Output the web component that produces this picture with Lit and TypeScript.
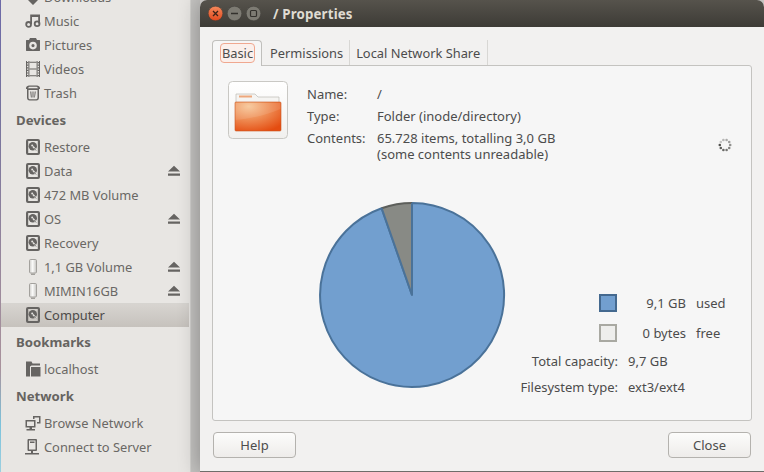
import { LitElement, html, css, svg } from "lit";
import { customElement } from "lit/decorators.js";

const icons: Record<string, unknown> = {
  drive: svg`<path fill-rule="evenodd" d="M3 0h10a2 2 0 0 1 2 2v12a2 2 0 0 1-2 2H3a2 2 0 0 1-2-2V2a2 2 0 0 1 2-2zM3.200 2v12h9.600V2z"/>
    <circle cx="7.800" cy="7.300" r="4.200"/><circle cx="7.200" cy="6.600" r="1" fill="#e8e6e3"/>
    <path d="M8 7.500l3.500 4.200" stroke="#e8e6e3" stroke-width="1.400"/><path d="M9 9l2.200 2.600" stroke="#666462" stroke-width=".8"/>`,
  usb: svg`<defs><linearGradient id="stick" x1="0" x2="1" y1="0" y2="0"><stop offset="0" stop-color="#cfcecb"/><stop offset=".45" stop-color="#fbfbfa"/><stop offset="1" stop-color="#c4c3c0"/></linearGradient></defs>
    <path fill="url(#stick)" stroke="#a3a19d" d="M4.500 1.500c0-.6.500-1 1-1h5c.5 0 1 .4 1 1v11.500c0 .6-.5 1-1 1h-5c-.5 0-1-.4-1-1z"/>
    <path fill="#a3a19d" d="M6 14.500h4V16H6z"/>`,
  download: svg`<path d="M5.500 0h5v9H15l-7 7-7-7h4.500z"/>`,
  music: svg`<path d="M5.200 1.500h9.800V4H7v7H5.200zM13.200 4H15v6.500h-1.800z"/>
    <circle cx="3.600" cy="11.400" r="2.400" fill="none" stroke="#666462" stroke-width="1.800"/>
    <circle cx="12.100" cy="10.700" r="2.400" fill="none" stroke="#666462" stroke-width="1.800"/>`,
  camera: svg`<path fill-rule="evenodd" d="M1.500 3H4l1-2h6l1 2h2.500c.3 0 .5.2.5.5v10c0 .3-.2.500-.5.500h-13c-.3 0-.5-.2-.5-.500v-10c0-.3.200-.500.500-.500zM8 4.800a3.800 3.800 0 1 0 0 7.600 3.800 3.800 0 0 0 0-7.600zM8 7a1.600 1.600 0 1 1 0 3.200A1.600 1.600 0 0 1 8 7z"/>`,
  film: svg`<path d="M1 0h1v16H1zM3.400 0h1v16h-1zM11.600 0h1v16h-1zM14 0h1v16h-1z"/>
    <path d="M2 1h1.400v1.200H2zM2 3.600h1.400v1.200H2zM2 6.200h1.400v1.200H2zM2 8.800h1.400V10H2zM2 11.400h1.400v1.200H2zM2 14h1.400v1.200H2zM12.600 1H14v1.200h-1.400zM12.600 3.600H14v1.200h-1.400zM12.600 6.200H14v1.200h-1.400zM12.600 8.800H14V10h-1.400zM12.600 11.400H14v1.200h-1.400zM12.600 14H14v1.200h-1.400z"/>
    <path d="M4.400 .8h7.200v1H4.400zM4.400 7.500h7.200v1H4.400zM4.400 14.200h7.200v1H4.400z"/>`,
  trash: svg`<path fill-rule="evenodd" d="M4 .5h8c1.200 0 3 1 3 2.500v1h-1v8.500c0 1.800-1 3-2.500 3h-7C3 15.500 2 14.300 2 12.500V4H1V3C1 1.500 2.800 .5 4 .5zM3 3.200h10c0-.9-1.300-1.500-2-1.500H5c-.7 0-2 .6-2 1.500zM3.500 5v7.500c0 1 .500 1.700 1.200 1.700h6.600c.7 0 1.200-.7 1.200-1.700V5z"/>
    <path d="M5.200 6.500h1.100l.5 6H5.900zM9.700 6.500h1.100l-.9 6H9.200zM7.500 6.500h1v6h-1z"/>`,
  folder: svg`<path d="M1 .5h5.500l1 2H15v2H6.500L5 5.500V15.500H1z"/><path d="M6 6h9.500v9.500H6z"/>`,
  network: svg`<path fill-rule="evenodd" d="M8 1h7.500v7.500H12V7h2V2.500H9.500V4H8zM.5 5h10v7.500H7v1.500h3v1.500H1.500V14h3v-1.500H.5zM2 6.500v4.500h7V6.500z"/>`,
  server: svg`<path fill-rule="evenodd" d="M3.500 0h7.500c.5 0 1 .5 1 1v10c0 .5-.5 1-1 1H8v2h6v1.500H0V14h6v-2H3.500c-.5 0-1-.5-1-1V1c0-.5.500-1 1-1zM4 1.500v9h6.500v-9zM5 2.500h4.500V4H5z"/>`,
};

type Row = { label: string; icon: string; eject?: boolean; selected?: boolean };
type Section = { title?: string; rows: Row[] };

const sections: Section[] = [
  {
    rows: [
      { label: "Downloads", icon: "download" },
      { label: "Music", icon: "music" },
      { label: "Pictures", icon: "camera" },
      { label: "Videos", icon: "film" },
      { label: "Trash", icon: "trash" },
    ],
  },
  {
    title: "Devices",
    rows: [
      { label: "Restore", icon: "drive" },
      { label: "Data", icon: "drive", eject: true },
      { label: "472 MB Volume", icon: "drive" },
      { label: "OS", icon: "drive", eject: true },
      { label: "Recovery", icon: "drive" },
      { label: "1,1 GB Volume", icon: "usb", eject: true },
      { label: "MIMIN16GB", icon: "usb", eject: true },
      { label: "Computer", icon: "drive", selected: true },
    ],
  },
  { title: "Bookmarks", rows: [{ label: "localhost", icon: "folder" }] },
  {
    title: "Network",
    rows: [
      { label: "Browse Network", icon: "network" },
      { label: "Connect to Server", icon: "server" },
    ],
  },
];

@customElement("app-sidebar")
export class AppSidebar extends LitElement {
  static styles = css`
    :host {
      display: block;
      width: 190px;
      flex: none;
      box-sizing: border-box;
      background: #e8e6e3;
      padding-left: 1px;
      color: #6a6865;
      font-size: 12.85px;
      overflow: hidden;
      position: relative;
    }
    .list {
      margin-top: -15px;
    }
    h3 {
      margin: 0;
      height: 30px;
      line-height: 30px;
      padding-left: 15px;
      font-size: 13.2px;
      font-weight: 700;
      color: #666461;
    }
    .row {
      display: flex;
      align-items: center;
      height: 24px;
      padding: 0 10px 0 24px;
    }
    .row.selected {
      margin-right: 1px;
      box-shadow: inset 0 1px 0 #d6d4d0;
      background: linear-gradient(#d8d5d1, #c6c2bd);
      color: #4c4a48;
    }
    .row svg {
      width: 16px;
      height: 16px;
      fill: #666462;
      flex: none;
    }
    .row span {
      margin-left: 3px;
      flex: 1;
    }
    .row .eject {
      width: 12px;
      height: 12px;
      margin-left: 0;
      flex: none;
    }
    .edge {
      position: absolute;
      left: 0;
      top: 0;
      bottom: 0;
      width: 1px;
      background: linear-gradient(#6d6aa8 0, #77749e 25%, #9c8a9c 60%, #a9929c 78%, #7cc3dc 90%, #9ccfe0 100%);
    }
  `;

  render() {
    return html`
      <div class="edge"></div>
      <div class="list">
        ${sections.map(
          (s) => html`
            ${s.title ? html`<h3>${s.title}</h3>` : ""}
            ${s.rows.map(
              (r) => html`
                <div class="row ${r.selected ? "selected" : ""}">
                  <svg viewBox="0 0 16 16">${icons[r.icon]}</svg>
                  <span>${r.label}</span>
                  ${r.eject
                    ? html`<svg class="eject" viewBox="0 0 12 12"><path d="M6 .7l6 5.800H0zM0 8.400h12v2.300H0z" /></svg>`
                    : ""}
                </div>
              `
            )}
          `
        )}
      </div>
    `;
  }
}

@customElement("app-root")
export class AppRoot extends LitElement {
  static styles = css`
    :host {
      display: flex;
      width: 764px;
      height: 472px;
      overflow: hidden;
      background: #d9d7d4;
      font-family: "Noto Sans", sans-serif;
      font-size: 13px;
      color: #4c4c4c;
    }
    .gap {
      width: 10px;
      flex: none;
      background: linear-gradient(90deg, #d2d1ce 0 1px, #c4c3c1 1px);
    }
    .dialog {
      flex: 1;
      display: flex;
      flex-direction: column;
      background: #f2f1f0;
      border-radius: 7px 7px 0 0;
      border-bottom: 1px solid #6e6d6a;
      box-shadow: 0 0 22px rgba(0, 0, 0, 0.32);
      position: relative;
    }
    .titlebar {
      display: flex;
      align-items: center;
      height: 27px;
      flex: none;
      box-sizing: border-box;
      padding-left: 8px;
      border-radius: 7px 7px 0 0;
      background: linear-gradient(#56534c, #3d3b36);
      color: #dfdbd2;
      font-weight: 700;
      font-size: 13.3px;
    }
    .wbtn {
      width: 15px;
      height: 15px;
      flex: none;
      margin-right: 4px;
    }
    .title {
      margin-left: 8px;
      letter-spacing: 0.15px;
    }
    .body {
      flex: 1;
      display: flex;
      flex-direction: column;
      padding: 13px 12px 13px;
      min-height: 0;
    }
    .tabs {
      display: flex;
      height: 25px;
      flex: none;
      position: relative;
      z-index: 1;
      font-size: 12.85px;
    }
    .tab {
      display: flex;
      align-items: center;
      box-sizing: border-box;
      height: 25px;
      padding: 0 6px 0 8px;
      border-right: 1px solid #d8d7d4;
    }
    .tab.share {
      padding-left: 6px;
      padding-right: 7px;
    }
    .tab.active {
      align-items: flex-start;
      padding: 2px 6px 0 7px;
      height: 26px;
      border: 1px solid #c0bfbc;
      border-bottom: 0;
      border-radius: 4px 4px 0 0;
      background: #f6f6f6;
    }
    .focus {
      display: block;
      box-sizing: border-box;
      width: 35px;
      text-align: center;
      line-height: 18px;
      border: 1px solid #f0a890;
      border-radius: 4px;
      background: #fbf0ec;
    }
    .panel {
      flex: 1;
      box-sizing: border-box;
      border: 1px solid #c4c3c0;
      border-radius: 0 3px 3px 3px;
      background: #f6f6f6;
    }
    .top {
      display: flex;
      padding: 15px 19px 0 15px;
    }
    .tile {
      width: 60px;
      height: 58px;
      flex: none;
    }
    .info {
      display: grid;
      grid-template-columns: 70px auto;
      row-gap: 6px;
      margin-left: 19px;
      padding-top: 5px;
      line-height: 16px;
      align-self: flex-start;
    }
    .spinner {
      width: 14px;
      height: 14px;
      margin: auto 0 10px auto;
    }
    .chart {
      display: flex;
      align-items: flex-start;
      margin-top: 39px;
      padding-left: 105px;
    }
    .pie {
      width: 188px;
      height: 188px;
      flex: none;
    }
    .legend {
      display: grid;
      grid-template-columns: 105px 58px auto;
      grid-template-rows: 30px 30px 26px 26px;
      column-gap: 10px;
      align-items: center;
      margin: 87px 0 0 7px;
    }
    .swatch {
      justify-self: end;
      box-sizing: border-box;
      width: 18px;
      height: 18px;
      margin-right: 1px;
      border: 2px solid;
    }
    .swatch.used {
      background: #729fcf;
      border-color: #44698f;
    }
    .swatch.free {
      background: #eeeeec;
      border-color: #a9a9a2;
    }
    .size,
    .key {
      text-align: right;
      white-space: nowrap;
    }
    .wide {
      grid-column: 2 / 4;
    }
    .footer {
      display: flex;
      justify-content: space-between;
      flex: none;
      margin-top: 11px;
      padding: 0 1px;
    }
    .button {
      box-sizing: border-box;
      width: 83px;
      height: 26px;
      line-height: 24px;
      text-align: center;
      border: 1px solid #b4b2ae;
      border-radius: 4px;
      background: linear-gradient(#fcfcfb, #eeecea);
    }
  `;

  private spinner() {
    const dots = Array.from({ length: 10 }, (_, i) => {
      const a = (i / 10) * Math.PI * 2;
      return svg`<circle cx=${7 + 5.2 * Math.cos(a)} cy=${7 + 5.2 * Math.sin(a)} r="1.300" fill="#4f4f4c" opacity=${0.3 + (0.7 * ((i + 4) % 10)) / 9} />`;
    });
    return html`<svg class="spinner" viewBox="0 0 14 14">${dots}</svg>`;
  }

  render() {
    return html`
      <app-sidebar></app-sidebar>
      <div class="gap"></div>
      <div class="dialog">
        <div class="titlebar">
          <svg class="wbtn" viewBox="0 0 15 15">
            <defs>
              <linearGradient id="cl" x1="0" y1="0" x2="0" y2="1">
                <stop offset="0" stop-color="#f58a5c" /><stop offset="1" stop-color="#e1481d" />
              </linearGradient>
            </defs>
            <circle cx="7.500" cy="7.500" r="7.300" fill="url(#cl)" stroke="#3a3834" stroke-width=".5" />
            <path d="M5 5l5 5M10 5l-5 5" stroke="#3d2318" stroke-width="1.300" />
          </svg>
          <svg class="wbtn" viewBox="0 0 15 15">
            <circle cx="7.500" cy="7.500" r="7.300" fill="#7d7b73" stroke="#3a3834" stroke-width=".5" />
            <path d="M4 7.500h7" stroke="#33312d" stroke-width="1.500" />
          </svg>
          <svg class="wbtn" viewBox="0 0 15 15">
            <circle cx="7.500" cy="7.500" r="7.300" fill="#7d7b73" stroke="#3a3834" stroke-width=".5" />
            <rect x="4.500" y="4.500" width="6" height="6" rx="1" fill="none" stroke="#33312d" stroke-width="1.200" />
          </svg>
          <span class="title">/ Properties</span>
        </div>
        <div class="body">
          <div class="tabs">
            <div class="tab active"><span class="focus">Basic</span></div>
            <div class="tab">Permissions</div>
            <div class="tab share">Local Network Share</div>
          </div>
          <div class="panel">
            <div class="top">
              <svg class="tile" viewBox="0 0 60 58">
                <defs>
                  <linearGradient id="tileBg" x1="0" y1="0" x2="0" y2="1">
                    <stop offset="0" stop-color="#ffffff" /><stop offset="1" stop-color="#f1f0ee" />
                  </linearGradient>
                  <radialGradient id="fold" cx=".3" cy=".15" r=".95">
                    <stop offset="0" stop-color="#f6c596" /><stop offset=".45" stop-color="#ef9058" /><stop offset="1" stop-color="#e44c10" />
                  </radialGradient>
                </defs>
                <rect x=".5" y=".5" width="59" height="57" rx="4" fill="url(#tileBg)" stroke="#c9c8c4" />
                <path d="M8 13h19l3 3h21v6H8z" fill="#f5f4f2" stroke="#bdbab5" stroke-width=".7" />
                <rect x="11" y="14.500" width="13" height="2" fill="#eea77c" />
                <rect x="7" y="21" width="46" height="29" rx="1" fill="url(#fold)" stroke="#c9551f" stroke-width=".6" />
                <path d="M7.500 39C22 38 38 34 52.500 28V22H7.500z" fill="#fff" opacity=".1" />
              </svg>
              <div class="info">
                <span>Name:</span><span>/</span>
                <span>Type:</span><span>Folder (inode/directory)</span>
                <span>Contents:</span><span>65.728 items, totalling 3,0 GB<br />(some contents unreadable)</span>
              </div>
              ${this.spinner()}
            </div>
            <div class="chart">
              <svg class="pie" viewBox="0 0 188 188">
                <path d="M94 94 L94 2 A92 92 0 1 1 63.600 7.200 Z" fill="#729fcf" stroke="#4a7299" stroke-width="2" stroke-linejoin="round" />
                <path d="M94 94 L63.600 7.200 A92 92 0 0 1 94 2 Z" fill="#888a85" />
                <path d="M63.600 7.200 A92 92 0 0 1 94 2" fill="none" stroke="#5d5f5b" stroke-width="2" />
                <path d="M94 94 L94 2M94 94L63.600 7.200" fill="none" stroke="#4a7299" stroke-width="2" />
              </svg>
              <div class="legend">
                <div class="swatch used"></div><div class="size">9,1 GB</div><div>used</div>
                <div class="swatch free"></div><div class="size">0 bytes</div><div>free</div>
                <div class="key">Total capacity:</div><div class="wide">9,7 GB</div>
                <div class="key">Filesystem type:</div><div class="wide">ext3/ext4</div>
              </div>
            </div>
          </div>
          <div class="footer">
            <div class="button">Help</div>
            <div class="button">Close</div>
          </div>
        </div>
      </div>
    `;
  }
}
